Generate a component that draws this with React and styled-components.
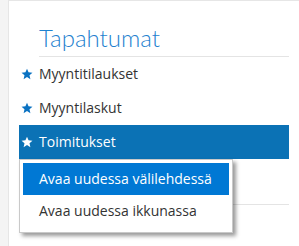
import React, { useState } from "react";
import styled, { createGlobalStyle } from "styled-components";

const GlobalStyle = createGlobalStyle`
  html, body {
    margin: 0;
    padding: 0;
    background: #f4f4f4;
    font-family: "Open Sans", "Liberation Sans", sans-serif;
  }
`;

const items = [
  { id: 1, label: "Myyntitilaukset" },
  { id: 2, label: "Myyntilaskut" },
  { id: 3, label: "Toimitukset" },
];

const menuItems = ["Avaa uudessa välilehdessä", "Avaa uudessa ikkunassa"];

function Star({ color }) {
  return (
    <svg width="12" height="12" viewBox="0 0 24 24">
      <path
        fill={color}
        d="M12 1.5l3.1 7.2 7.8.7-5.9 5.2 1.8 7.7L12 18.2l-6.8 4.1 1.8-7.7L1.1 9.4l7.8-.7z"
      />
    </svg>
  );
}

function App() {
  const [active] = useState(3);
  const [hovered] = useState(0);

  return (
    <>
      <GlobalStyle />
      <Page>
        <Panel>
          <Title>Tapahtumat</Title>
          <List>
            {items.map((item) => (
              <Row key={item.id} active={item.id === active}>
                <Star color={item.id === active ? "#ffffff" : "#0a72c2"} />
                <RowText>{item.label}</RowText>
                {item.id === active && (
                  <Menu>
                    {menuItems.map((m, i) => (
                      <MenuItem key={m} hovered={i === hovered}>
                        {m}
                      </MenuItem>
                    ))}
                  </Menu>
                )}
              </Row>
            ))}
          </List>
          <Spacer />
        </Panel>
      </Page>
    </>
  );
}

export default App;

const Page = styled.div`
  padding-left: 8px;
  min-height: 246px;
  box-sizing: border-box;
  display: flex;
`;

const Panel = styled.div`
  flex: 1;
  background: #ffffff;
  border-top: 1px solid #e6e6e6;
  border-left: 1px solid #e6e6e6;
  padding: 21px 10px 0 10px;
`;

const Title = styled.h2`
  margin: 0 0 0 20px;
  padding-bottom: 2px;
  height: 32px;
  line-height: 32px;
  font-family: Lato, "Open Sans", sans-serif;
  font-size: 24px;
  font-weight: 300;
  color: #1f82cf;
  border-bottom: 1px solid #e4e4e4;
`;

const List = styled.div`
  display: flex;
  flex-direction: column;
`;

const Row = styled.div`
  position: relative;
  display: flex;
  align-items: center;
  height: 34px;
  padding-left: 2px;
  gap: 6px;
  background: ${(p) => (p.active ? "#0b72b5" : "transparent")};
  color: ${(p) => (p.active ? "#ffffff" : "#333333")};
`;

const RowText = styled.span`
  font-size: 14px;
  line-height: 34px;
`;

const Menu = styled.div`
  position: absolute;
  top: 100%;
  left: 0;
  width: 206px;
  padding: 3px 3px 5px;
  background: #ffffff;
  border: 1px solid #c9c9c9;
  box-shadow: 3px 3px 4px rgba(0, 0, 0, 0.4);
  z-index: 2;
`;

const MenuItem = styled.div`
  height: 32px;
  line-height: 32px;
  padding-left: 16px;
  font-size: 14px;
  background: ${(p) => (p.hovered ? "#0078d4" : "transparent")};
  color: ${(p) => (p.hovered ? "#ffffff" : "#333333")};
`;

const Spacer = styled.div`
  height: 45px;
  border-bottom: 1px solid #e4e4e4;
`;
